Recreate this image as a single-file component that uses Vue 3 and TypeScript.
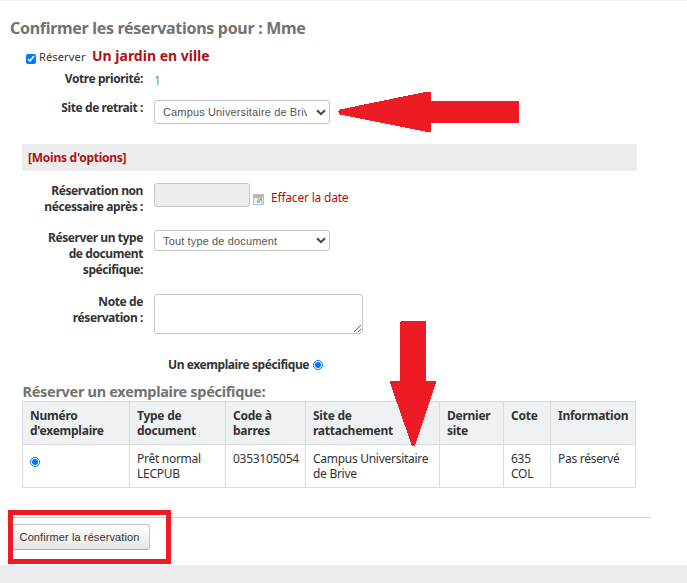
<script setup lang="ts">
import { ref } from 'vue'

interface Column { title: string; width: number }

const columns: Column[] = [
  { title: "Numéro d'exemplaire", width: 107 },
  { title: 'Type de document', width: 96 },
  { title: 'Code à barres', width: 80 },
  { title: 'Site de rattachement', width: 134 },
  { title: 'Dernier site', width: 64 },
  { title: 'Cote', width: 47 },
  { title: 'Information', width: 85 },
]
const item: string[] = ['Prêt normal LECPUB', '0353105054', 'Campus Universitaire de Brive', '', '635 COL', 'Pas réservé']
const reserve = ref(true)
const specific = ref(true)
const copy = ref(true)
</script>

<template>
  <main class="page">
    <h1><span>Confirmer les réservations pour : Mme</span></h1>
    <div class="title-row">
      <input v-model="reserve" class="check" type="checkbox" />
      <span class="reserve">Réserver</span>
      <a class="book">Un jardin en ville</a>
    </div>
    <div class="row priority">
      <label>Votre priorité:</label>
      <span class="rank">1</span>
    </div>
    <div class="row site">
      <label>Site de retrait :</label>
      <div class="select tall">
        <span class="value">Campus Universitaire de Brive</span>
        <svg class="chevron" viewBox="0 0 10 7"><path d="M1 1.2 5 5.2 9 1.2" /></svg>
      </div>
    </div>
    <div class="toggle"><a>[Moins d'options]</a></div>
    <div class="row date">
      <label>Réservation non<br />nécessaire après :</label>
      <input class="date-input" type="text" disabled />
      <svg class="calendar" viewBox="0 0 11 11">
        <rect x=".5" y=".5" width="10" height="10" fill="#dceafa" stroke="#a3c0e4" />
        <rect x="1" y="1" width="9" height="3" fill="#f5a873" />
        <path d="M2 5.5h2M2 7.5h2M2 9.5h5" stroke="#fff" />
        <path d="M7 4.5h2v2H7zM4 6.5h3v2H4z" fill="#70b978" />
        <path d="M5 5h2M8 8h1.5" stroke="#7fa6d8" />
      </svg>
      <a class="clear">Effacer la date</a>
    </div>
    <div class="row type">
      <label>Réserver un type<br />de document<br />spécifique:</label>
      <div class="select">
        <span class="value">Tout type de document</span>
        <svg class="chevron" viewBox="0 0 10 7"><path d="M1 1.2 5 5.2 9 1.2" /></svg>
      </div>
    </div>
    <div class="row note">
      <label>Note de<br />réservation :</label>
      <textarea></textarea>
    </div>
    <div class="specific">
      <span>Un exemplaire spécifique</span>
      <input type="radio" :checked="specific" />
    </div>
    <h2><span>Réserver un exemplaire spécifique:</span></h2>
    <table>
      <colgroup><col v-for="c in columns" :key="c.title" :style="{ width: c.width + 'px' }" /></colgroup>
      <thead><tr><th v-for="c in columns" :key="c.title">{{ c.title }}</th></tr></thead>
      <tbody>
        <tr>
          <td><input class="copy" type="radio" :checked="copy" /></td>
          <td v-for="(cell, i) in item" :key="i">{{ cell }}</td>
        </tr>
      </tbody>
    </table>
    <div class="actions">
      <button>Confirmer la réservation</button>
    </div>
    <footer></footer>

    <svg class="arrow-left" viewBox="0 0 182 41" shape-rendering="crispEdges">
      <path d="M0 20.5 2 18.5 87 1H92L93 2V10H180L181 11V31L180 32H93V41H90L2 23.5Z" />
    </svg>
    <svg class="arrow-down" viewBox="0 0 46 126" shape-rendering="crispEdges">
      <path d="M11 1H35L36 2V61H46V63L25 126H22L0 63V61H10V2Z" />
    </svg>
    <div class="frame"></div>
  </main>
</template>

<style>
body { margin: 0; background: #fff; }
</style>

<style scoped>
* { box-sizing: border-box; }
.page {
  position: relative;
  width: 687px;
  height: 583px;
  overflow: hidden;
  display: flex;
  flex-direction: column;
  border-top: 1px solid #eef2f3;
  font: 12px/16px "Noto Sans", "Open Sans", sans-serif;
  color: #333;
}
h1, h2 { margin: 0; color: #727272; font-weight: 700; letter-spacing: -.3px; white-space: nowrap; }
h1 { height: 44px; padding: 16px 0 0 10px; font-size: 16px; line-height: 22px; }
h2 { height: 22px; margin: 6px 0 0 22.5px; padding-top: 1px; font-size: 14.5px; line-height: 22px; }
a { color: #b01116; }
.title-row { display: flex; height: 24px; padding-left: 26px; }
.check { width: 10px; height: 10px; margin: 9px 3px 0 0; accent-color: #0075ff; }
.reserve { margin-top: 4px; font-size: 11px; letter-spacing: .15px; width: 53px; }
.book { font-size: 14px; font-weight: 700; line-height: 20px; margin-top: 1px; white-space: nowrap; }
.row { display: flex; align-items: flex-start; }
.row label { width: 143px; margin-right: 11px; text-align: right; font-weight: 700; letter-spacing: -.41px; white-space: nowrap; }
.priority { height: 31px; padding-top: 2px; }
.rank { margin: 2px 0 0; color: #5b93bb; }
.site { height: 44px; }
.select {
  display: flex;
  align-items: center;
  width: 176px;
  height: 21px;
  padding: 0 3px 0 8px;
  border: 1px solid #c6c6c6;
  border-radius: 3px;
  font: 11px/16px "Liberation Sans", Arial, sans-serif;
  letter-spacing: .14px;
  color: #555;
}
.select.tall { height: 24px; }
.value { width: 144px; overflow: hidden; white-space: nowrap; }
.chevron { width: 10px; height: 7px; margin-left: 9px; fill: none; stroke: #454545; stroke-width: 2; flex: none; }
.toggle { width: 615px; height: 27px; margin-left: 22px; padding-left: 6px; background: #ededed; line-height: 27px; font-weight: 700; letter-spacing: -.25px; }
.date { height: 59px; padding-top: 12px; }
.date-input { width: 96px; height: 24px; margin: 0; border: 1px solid #c6c6c6; border-radius: 3px; background: #ededed; }
.calendar { width: 11px; height: 11px; margin: 11px 7px 0 3px; }
.clear { margin-top: 7px; letter-spacing: -.2px; }
.type { height: 64px; }
.note { height: 64px; }
textarea { width: 209px; height: 40px; margin: 0; border: 1px solid #c6c6c6; border-radius: 3px; resize: both; background: #fff; }
.specific { display: flex; height: 16px; margin-top: -1px; padding-left: 168px; align-items: center; font-weight: 700; letter-spacing: -.42px; }
.specific input { width: 10px; height: 10px; margin: 0 0 0 4px; accent-color: #0075ff; }
table { width: 614px; margin-left: 22px; table-layout: fixed; border-collapse: collapse; line-height: 15px; letter-spacing: -.28px; }
th, td { height: 43px; padding: 6px 7px; border: 1px solid #dadcdd; text-align: left; vertical-align: top; }
th { background: #eef2f3; font-weight: 700; letter-spacing: -.25px; }
.copy { display: block; width: 10px; height: 10px; margin: 6px 0 0; accent-color: #0075ff; }
.actions { width: 637px; margin: 29px 0 0 13px; border-top: 1px solid #ccc; padding-top: 6px; height: 48px; }
button {
  width: 139px;
  height: 26px;
  margin-left: -2px;
  padding: 0 2px 0 0;
  border: 1px solid #c6c6c6;
  border-bottom-color: #aaa;
  border-radius: 3px;
  background: linear-gradient(#fff, #e6e6e6);
  font: 11px "Liberation Sans", Arial, sans-serif;
  letter-spacing: .1px;
  color: #333;
}
footer { flex: 1; background: #ecedee; }
.arrow-left, .arrow-down { position: absolute; fill: #ed1c24; }
.arrow-left { left: 338px; top: 90px; width: 182px; height: 41px; }
.arrow-down { left: 390px; top: 319px; width: 46px; height: 126px; }
.frame { position: absolute; left: 8px; top: 509px; width: 163px; height: 54px; border: 5px solid #ed1c24; }
</style>
